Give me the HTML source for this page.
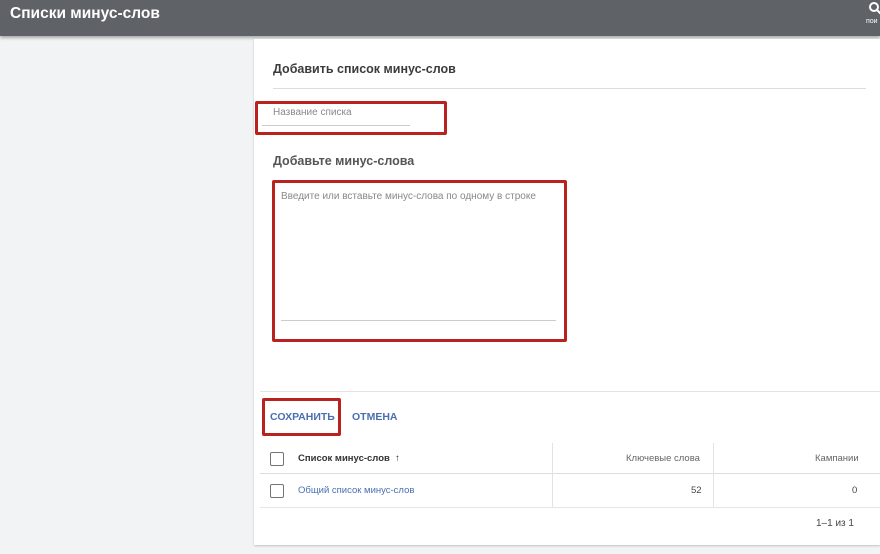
<!DOCTYPE html>
<html><head><meta charset="utf-8"><style>
body{margin:0;width:880px;height:554px;background:#f1f3f4;font-family:"Liberation Sans",sans-serif;position:relative;overflow:hidden}
.a{position:absolute}
.hdr{left:0;top:0;width:880px;height:36px;background:#5f6368;box-shadow:0 2px 3px rgba(0,0,0,.3)}
.card{left:254px;top:39px;width:626px;height:506px;background:#fff;box-shadow:0 1px 2px rgba(0,0,0,.2)}
.red{border:3px solid #b8221f;border-radius:2px;box-sizing:border-box}
.t{white-space:nowrap}
.cb{width:12px;height:12px;border:1.5px solid #757575;border-radius:2px}
</style></head><body>
<div class="a hdr"></div>
<div class="a t" style="left:10px;top:5px;color:#fff;font-size:15.5px;font-weight:bold">Списки минус-слов</div>
<svg class="a" style="left:868px;top:1px" width="14" height="14" viewBox="0 0 14 14"><circle cx="6" cy="6" r="4" stroke="#fff" stroke-width="2" fill="none"/><path d="M9 9l4 4" stroke="#fff" stroke-width="2"/></svg>
<div class="a t" style="left:866px;top:18px;color:#fff;font-size:7px">пои</div>
<div class="a card"></div>
<div class="a t" style="left:273px;top:62px;font-size:12.5px;font-weight:bold;color:#3c3c3c">Добавить список минус-слов</div>
<div class="a" style="left:273px;top:88px;width:593px;height:1px;background:#ddd"></div>
<div class="a red" style="left:255px;top:101px;width:192px;height:34px"></div>
<div class="a t" style="left:273px;top:107px;font-size:10px;color:#888">Название списка</div>
<div class="a" style="left:262px;top:125px;width:148px;height:1px;background:#ccc"></div>
<div class="a t" style="left:273px;top:154px;font-size:12.5px;font-weight:bold;color:#555">Добавьте минус-слова</div>
<div class="a red" style="left:272px;top:180px;width:295px;height:162px"></div>
<div class="a t" style="left:281px;top:191px;font-size:10px;color:#888">Введите или вставьте минус-слова по одному в строке</div>
<div class="a" style="left:281px;top:320px;width:275px;height:1px;background:#ccc"></div>
<div class="a" style="left:260px;top:391px;width:620px;height:1px;background:#e3e3e3"></div>
<div class="a red" style="left:262px;top:398px;width:79px;height:38px"></div>
<div class="a t" style="left:270px;top:411px;font-size:10.5px;font-weight:bold;color:#4a6fb0">СОХРАНИТЬ</div>
<div class="a t" style="left:352px;top:411px;font-size:10.5px;font-weight:bold;color:#4a6fb0">ОТМЕНА</div>
<div class="a" style="left:260px;top:473px;width:620px;height:1px;background:#ddd"></div>
<div class="a" style="left:260px;top:507px;width:620px;height:1px;background:#e6e6e6"></div>
<div class="a" style="left:552px;top:443px;width:1px;height:64px;background:#e3e3e3"></div>
<div class="a" style="left:713px;top:443px;width:1px;height:64px;background:#e3e3e3"></div>
<div class="a cb" style="left:270px;top:452px"></div>
<div class="a t" style="left:298px;top:453px;font-size:9.5px;font-weight:bold;color:#333">Список минус-слов &nbsp;↑</div>
<div class="a t" style="left:626px;top:453px;font-size:9.5px;color:#666">Ключевые слова</div>
<div class="a t" style="left:815px;top:453px;font-size:9.5px;color:#666">Кампании</div>
<div class="a cb" style="left:270px;top:484px"></div>
<div class="a t" style="left:298px;top:485px;font-size:9.5px;color:#4a6fb0">Общий список минус-слов</div>
<div class="a t" style="left:691px;top:485px;font-size:9.5px;color:#444">52</div>
<div class="a t" style="left:852px;top:485px;font-size:9.5px;color:#444">0</div>
<div class="a t" style="left:816px;top:518px;font-size:10px;color:#444">1–1 из 1</div>
</body></html>
